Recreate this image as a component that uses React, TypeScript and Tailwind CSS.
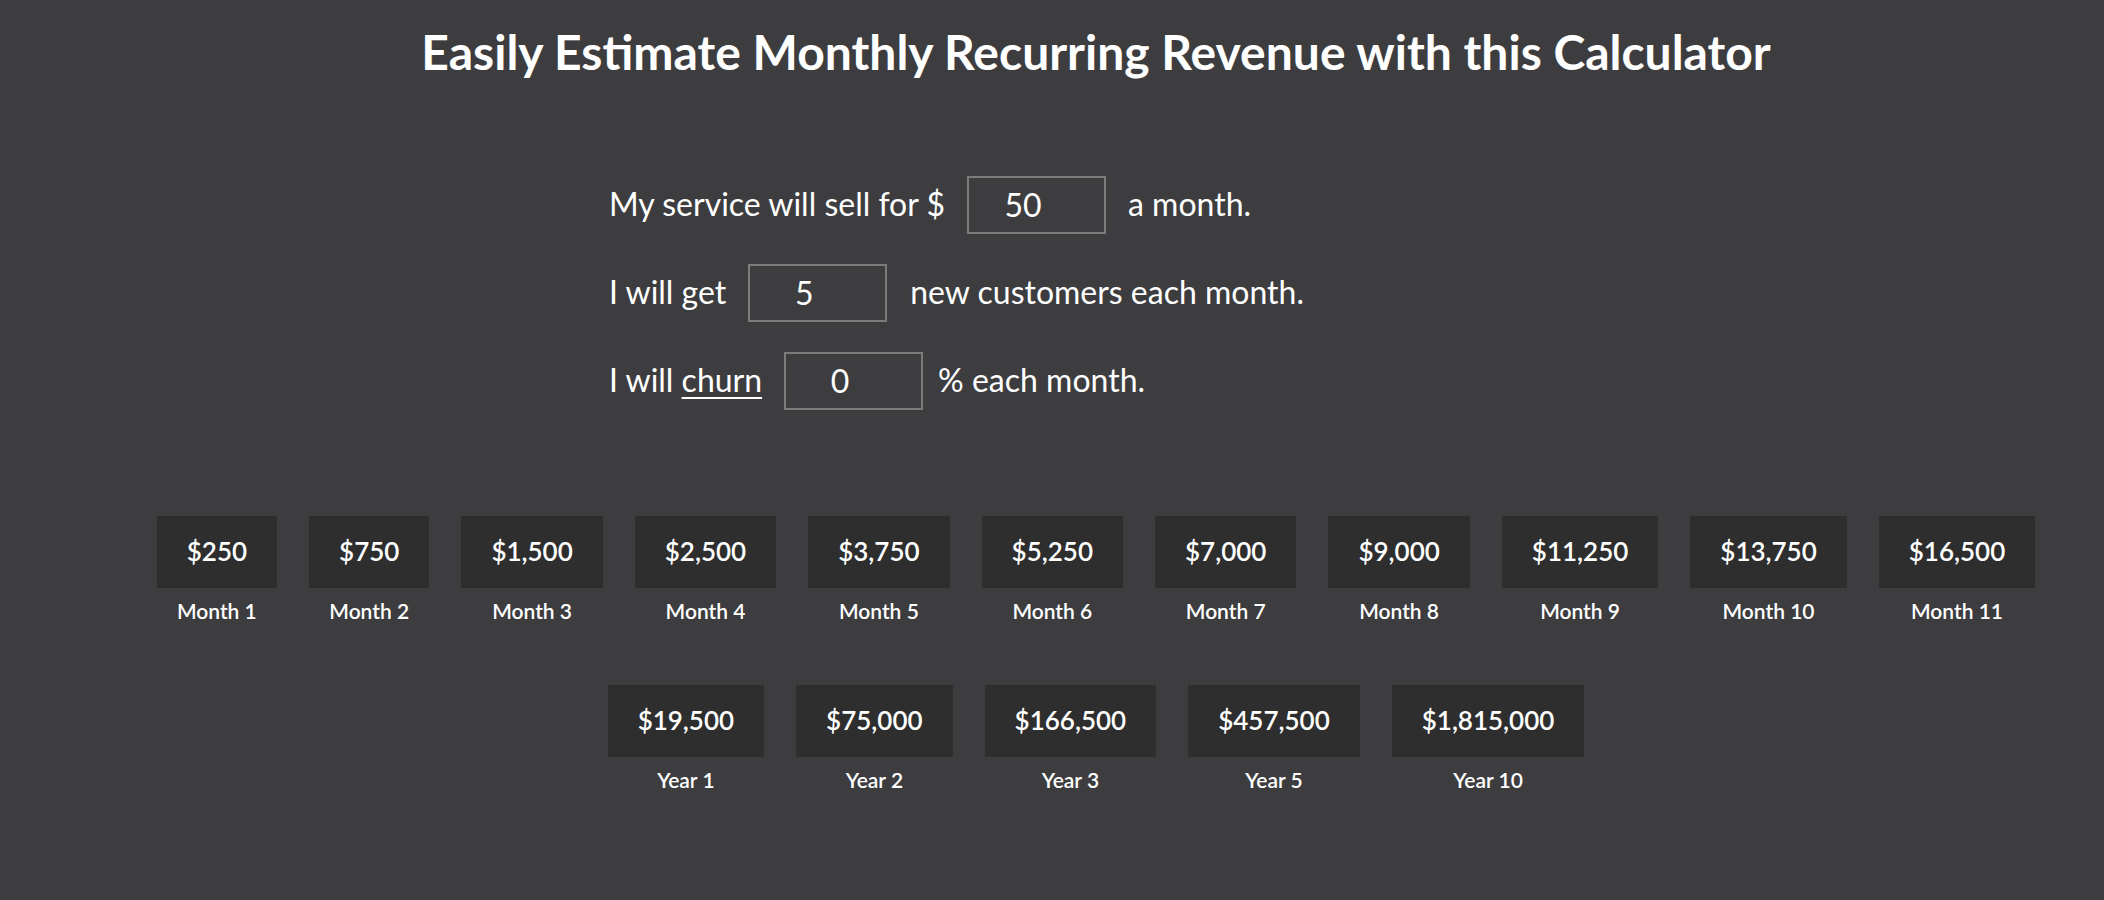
import React, { useState } from 'react'

const fmt = (n: number) => '$' + Math.round(n).toLocaleString('en-US')

// total revenue collected up to a given month: each month adds new customers, churn removes a share
const revenueAt = (price: number, perMonth: number, churn: number, month: number) => {
  let customers = 0
  let total = 0
  for (let i = 0; i < month; i++) {
    customers = customers * (1 - churn / 100) + perMonth
    total += customers * price
  }
  return total
}

const Card: React.FC<{ value: string; label: string }> = ({ value, label }) => (
  <div className="flex flex-col items-center">
    <div className="flex h-[72px] items-center bg-[#2e2e2e] px-[30px] text-[26px] font-semibold leading-[1.2]">
      {value}
    </div>
    <div className="mt-[10px] text-[21px] font-semibold leading-[1.2]">{label}</div>
  </div>
)

export default function App() {
  const [price, setPrice] = useState('50')
  const [customers, setCustomers] = useState('5')
  const [churn, setChurn] = useState('0')

  const p = parseFloat(price) || 0
  const c = parseFloat(customers) || 0
  const ch = parseFloat(churn) || 0

  const months = Array.from({ length: 11 }, (_, i) => i + 1)
  const years = [1, 2, 3, 5, 10]

  const inputCls =
    'h-[58px] w-[139px] border-2 border-[#7b7b7b] bg-transparent pr-[27px] text-center text-[32px] text-white outline-none'

  return (
    <div className="min-h-screen bg-[#3d3d3f] pl-[88px] pb-16 font-['Lato',sans-serif] text-white">
      <h1 className="pt-[23px] text-center text-[48px] font-bold leading-[1.2]">
        Easily Estimate Monthly Recurring Revenue with this Calculator
      </h1>

      <div className="mx-auto mt-[95px] flex w-[974px] flex-col gap-[30px] text-[32px] leading-[1.2]">
        <div className="flex h-[58px] items-center">
          <span>My service will sell for $</span>
          <input className={`${inputCls} ml-[22px] mr-[22px]`} value={price} onChange={(e) => setPrice(e.target.value)} />
          <span>a month.</span>
        </div>
        <div className="flex h-[58px] items-center">
          <span>I will get</span>
          <input className={`${inputCls} ml-[22px] mr-[23px]`} value={customers} onChange={(e) => setCustomers(e.target.value)} />
          <span>new customers each month.</span>
        </div>
        <div className="flex h-[58px] items-center">
          <span>
            I will <span className="underline decoration-2 underline-offset-[5px]">churn</span>
          </span>
          <input className={`${inputCls} ml-[22px] mr-[15px]`} value={churn} onChange={(e) => setChurn(e.target.value)} />
          <span>% each month.</span>
        </div>
      </div>

      <div className="mt-[106px] flex justify-center gap-8">
        {months.map((m) => (
          <Card key={m} value={fmt(revenueAt(p, c, ch, m))} label={`Month ${m}`} />
        ))}
      </div>

      <div className="mt-[62px] flex justify-center gap-8">
        {years.map((y) => (
          <Card key={y} value={fmt(revenueAt(p, c, ch, y * 12))} label={`Year ${y}`} />
        ))}
      </div>
    </div>
  )
}
